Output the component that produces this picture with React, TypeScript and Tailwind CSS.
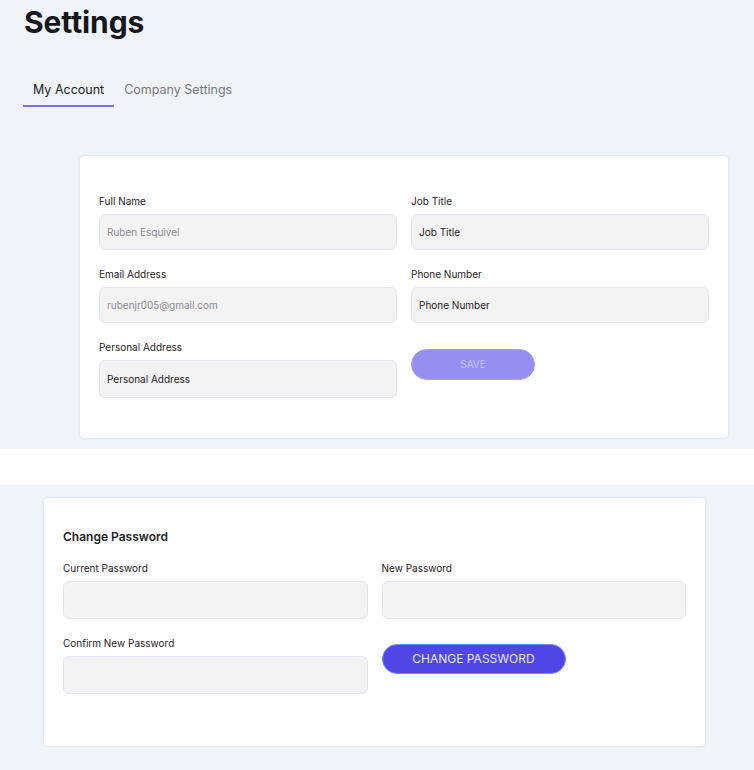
import { useState } from "react";

type FieldProps = {
	label: string;
	value?: string;
	placeholder?: string;
	muted?: boolean;
	h?: "sm" | "lg";
};

function Field({ label, value, placeholder, muted, h = "sm" }: FieldProps) {
	return (
		<div className="flex flex-col">
			<label className="text-[10px] leading-[14px] text-[#1f2023]">{label}</label>
			<input
				readOnly
				value={value ?? ""}
				placeholder={placeholder}
				className={`mt-[6px] w-full rounded-[6px] border border-[#e2e6ee] bg-[#f3f3f4] px-[7px] text-[10px] outline-none ${
					h === "lg" ? "h-[38px]" : "h-[36px]"
				} ${muted ? "text-[#8a8a8e]" : "text-[#1f2023]"} placeholder:text-[#1f2023]`}
			/>
		</div>
	);
}

export default function App() {
	const [tab, setTab] = useState<"account" | "company">("account");

	return (
		<div className="w-full min-h-[770px] font-['Inter','Noto_Sans',sans-serif] text-[#1f2023]">
			{/* верхняя часть: заголовок, табы, карточка аккаунта */}
			<div className="h-[449px] bg-[#f0f3f8] pt-[6px]">
				<h1 className="pl-[24px] text-[30px] font-bold leading-[32px] tracking-[-0.1px] text-[#16181d]">Settings</h1>

				<div className="mt-[42px] flex pl-[23px]">
					<button
						onClick={() => setTab("account")}
						className={`border-b-2 px-[10px] pb-[5px] text-[12.5px] leading-[20px] ${
							tab === "account" ? "border-[#7c70e6] text-[#222326]" : "border-transparent text-[#77787c]"
						}`}
					>
						My Account
					</button>
					<button
						onClick={() => setTab("company")}
						className={`border-b-2 px-[10px] pb-[5px] text-[12.5px] leading-[20px] ${
							tab === "company" ? "border-[#7c70e6] text-[#222326]" : "border-transparent text-[#77787c]"
						}`}
					>
						Company Settings
					</button>
				</div>

				<div className="ml-[80px] mt-[49px] h-[282px] w-[648px] rounded-[4px] bg-white px-[19px] pt-[38px] shadow-[0_0_3px_rgba(30,40,70,0.12)]">
					<div className="grid grid-cols-2 gap-x-[14px]">
						<div className="flex flex-col gap-[17px]">
							<Field label="Full Name" value="Ruben Esquivel" muted />
							<Field label="Email Address" value="rubenjr005@gmail.com" muted />
							<Field label="Personal Address" placeholder="Personal Address" h="lg" />
						</div>
						<div className="flex flex-col gap-[17px]">
							<Field label="Job Title" placeholder="Job Title" />
							<Field label="Phone Number" placeholder="Phone Number" />
							<div className="pt-[9px]">
								<button className="h-[31px] w-[124px] rounded-full border border-[#a29ef3] bg-[#948ff0] text-[10px] text-[#c9c6f8]">
									SAVE
								</button>
							</div>
						</div>
					</div>
				</div>
			</div>

			{/* белая полоса-разделитель */}
			<div className="h-[36px] bg-white" />

			{/* смена пароля */}
			<div className="h-[285px] bg-[#f0f3f8] pt-[13px]">
				<div className="ml-[44px] h-[248px] w-[661px] rounded-[4px] bg-white px-[19px] pt-[31px] shadow-[0_0_3px_rgba(30,40,70,0.12)]">
					<h2 className="text-[12px] font-semibold leading-[16px] text-[#222326]">Change Password</h2>
					<div className="mt-[16px] grid grid-cols-2 gap-x-[14px]">
						<div className="flex flex-col gap-[17px]">
							<Field label="Current Password" h="lg" />
							<Field label="Confirm New Password" h="lg" />
						</div>
						<div className="flex flex-col">
							<Field label="New Password" h="lg" />
							<div className="pt-[25px]">
								<button className="h-[30px] w-[184px] rounded-full border border-[#6f8ff5] bg-[#4f46e5] text-[12px] text-[#e6e6ff]">
									CHANGE PASSWORD
								</button>
							</div>
						</div>
					</div>
				</div>
			</div>
		</div>
	);
}
